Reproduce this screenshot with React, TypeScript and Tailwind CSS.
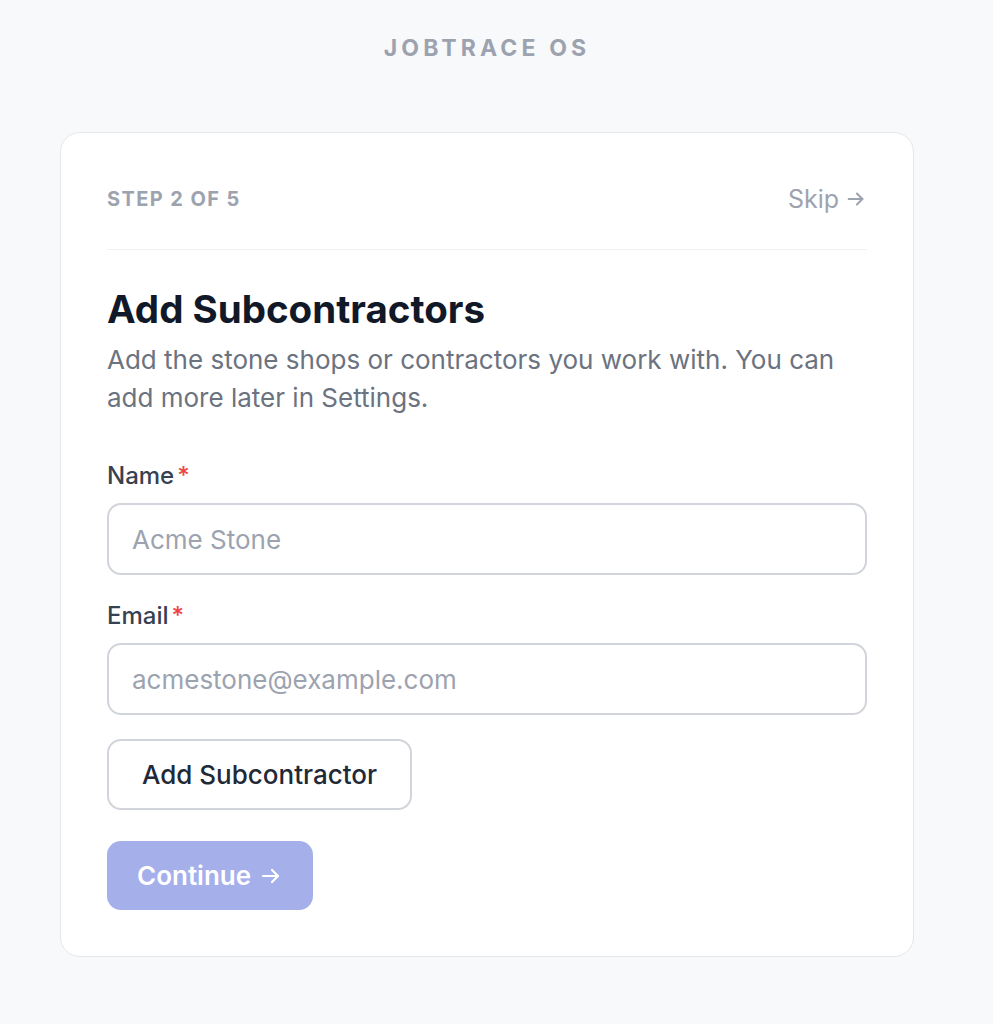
import React from "react";

function Arrow({ className }: { className?: string }) {
  return (
    <svg viewBox="0 0 24 24" fill="none" stroke="currentColor" strokeWidth={2.2} strokeLinecap="round" strokeLinejoin="round" className={className}>
      <path d="M4 12h15" />
      <path d="M13 6l6 6-6 6" />
    </svg>
  );
}

export default function App() {
  return (
    <div className="min-h-screen bg-[#f8f9fb] flex flex-col items-center pt-[34px] pb-[66px] pr-[19px]" style={{ fontFamily: "Inter, 'Noto Sans', sans-serif" }}>
      <div className="text-[23px] leading-[28px] font-bold tracking-[0.18em] text-[#9ca3af]">JOBTRACE OS</div>
      <div className="mt-[70px] w-[854px] bg-white border border-[#e5e7eb] rounded-[20px] px-[46px] pt-[52px] pb-[46px]">
        <div className="flex items-center justify-between pb-[36px] border-b border-[#f0f1f3]">
          <div className="text-[20px] leading-[28px] font-bold tracking-[0.07em] text-[#9ca3af]">STEP 2 OF 5</div>
          <div className="flex items-center gap-[6px] text-[25px] leading-[28px] text-[#9ca3af]">
            Skip
            <Arrow className="w-[22px] h-[22px]" />
          </div>
        </div>
        <h1 className="mt-[37px] text-[38.5px] leading-[44px] font-bold text-[#111827]">Add Subcontractors</h1>
        <p className="mt-[10px] text-[26px] leading-[38px] text-[#6b7280]">
          Add the stone shops or contractors you work with. You can add more later in Settings.
        </p>
        <div className="mt-[44px]">
          <label className="flex items-center text-[24px] leading-[30px] font-medium text-[#374151]">
            Name<span className="text-[#ef4444] ml-[3px]">*</span>
          </label>
          <input
            placeholder="Acme Stone"
            className="mt-[12px] w-full h-[72px] rounded-[14px] border-2 border-[#d1d5db] px-[23px] text-[26px] text-[#111827] placeholder:text-[#9ca3af] outline-none"
          />
        </div>
        <div className="mt-[26px]">
          <label className="flex items-center text-[24px] leading-[30px] font-medium text-[#374151]">
            Email<span className="text-[#ef4444] ml-[3px]">*</span>
          </label>
          <input
            placeholder="acmestone@example.com"
            className="mt-[12px] w-full h-[72px] rounded-[14px] border-2 border-[#d1d5db] px-[23px] text-[26px] text-[#111827] placeholder:text-[#9ca3af] outline-none"
          />
        </div>
        <button className="mt-[24px] h-[71px] px-[33px] rounded-[14px] border-2 border-[#d1d5db] bg-white text-[26px] font-medium text-[#1f2937]">
          Add Subcontractor
        </button>
        <div className="mt-[31px]">
          <button className="h-[69px] px-[30px] rounded-[14px] bg-[#a5b0eb] text-white text-[26px] font-semibold flex items-center gap-[8px]">
            Continue
            <Arrow className="w-[24px] h-[24px]" />
          </button>
        </div>
      </div>
    </div>
  );
}
